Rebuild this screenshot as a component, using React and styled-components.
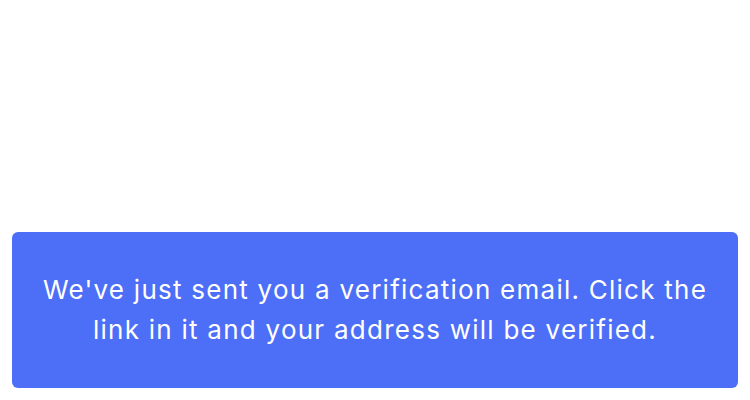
import React from 'react'
import styled, { createGlobalStyle } from 'styled-components'

const GlobalStyle = createGlobalStyle`
  html, body {
    margin: 0;
    padding: 0;
    background: #ffffff;
  }
  #root {
    height: 400px;
  }
`

const Screen = styled.div`
  height: 100%;
  box-sizing: border-box;
  display: flex;
  flex-direction: column;
  justify-content: flex-end;
  padding: 0 12px 12px;
`

const Notice = styled.div`
  background-color: #4d6ef6;
  border-radius: 6px;
  height: 156px;
  display: flex;
  align-items: center;
  justify-content: center;
  padding: 0 24px;
  box-sizing: border-box;
`

const Message = styled.p`
  margin: 0;
  color: #ffffff;
  font-family: Inter, 'Noto Sans', sans-serif;
  font-size: 26px;
  letter-spacing: 1.25px;
  line-height: 40px;
  text-align: center;
`

const App = () => {
  return (
    <>
      <GlobalStyle />
      <Screen>
        <Notice>
          <Message>
            We've just sent you a verification email. Click the link in it and
            your address will be verified.
          </Message>
        </Notice>
      </Screen>
    </>
  )
}

export default App
